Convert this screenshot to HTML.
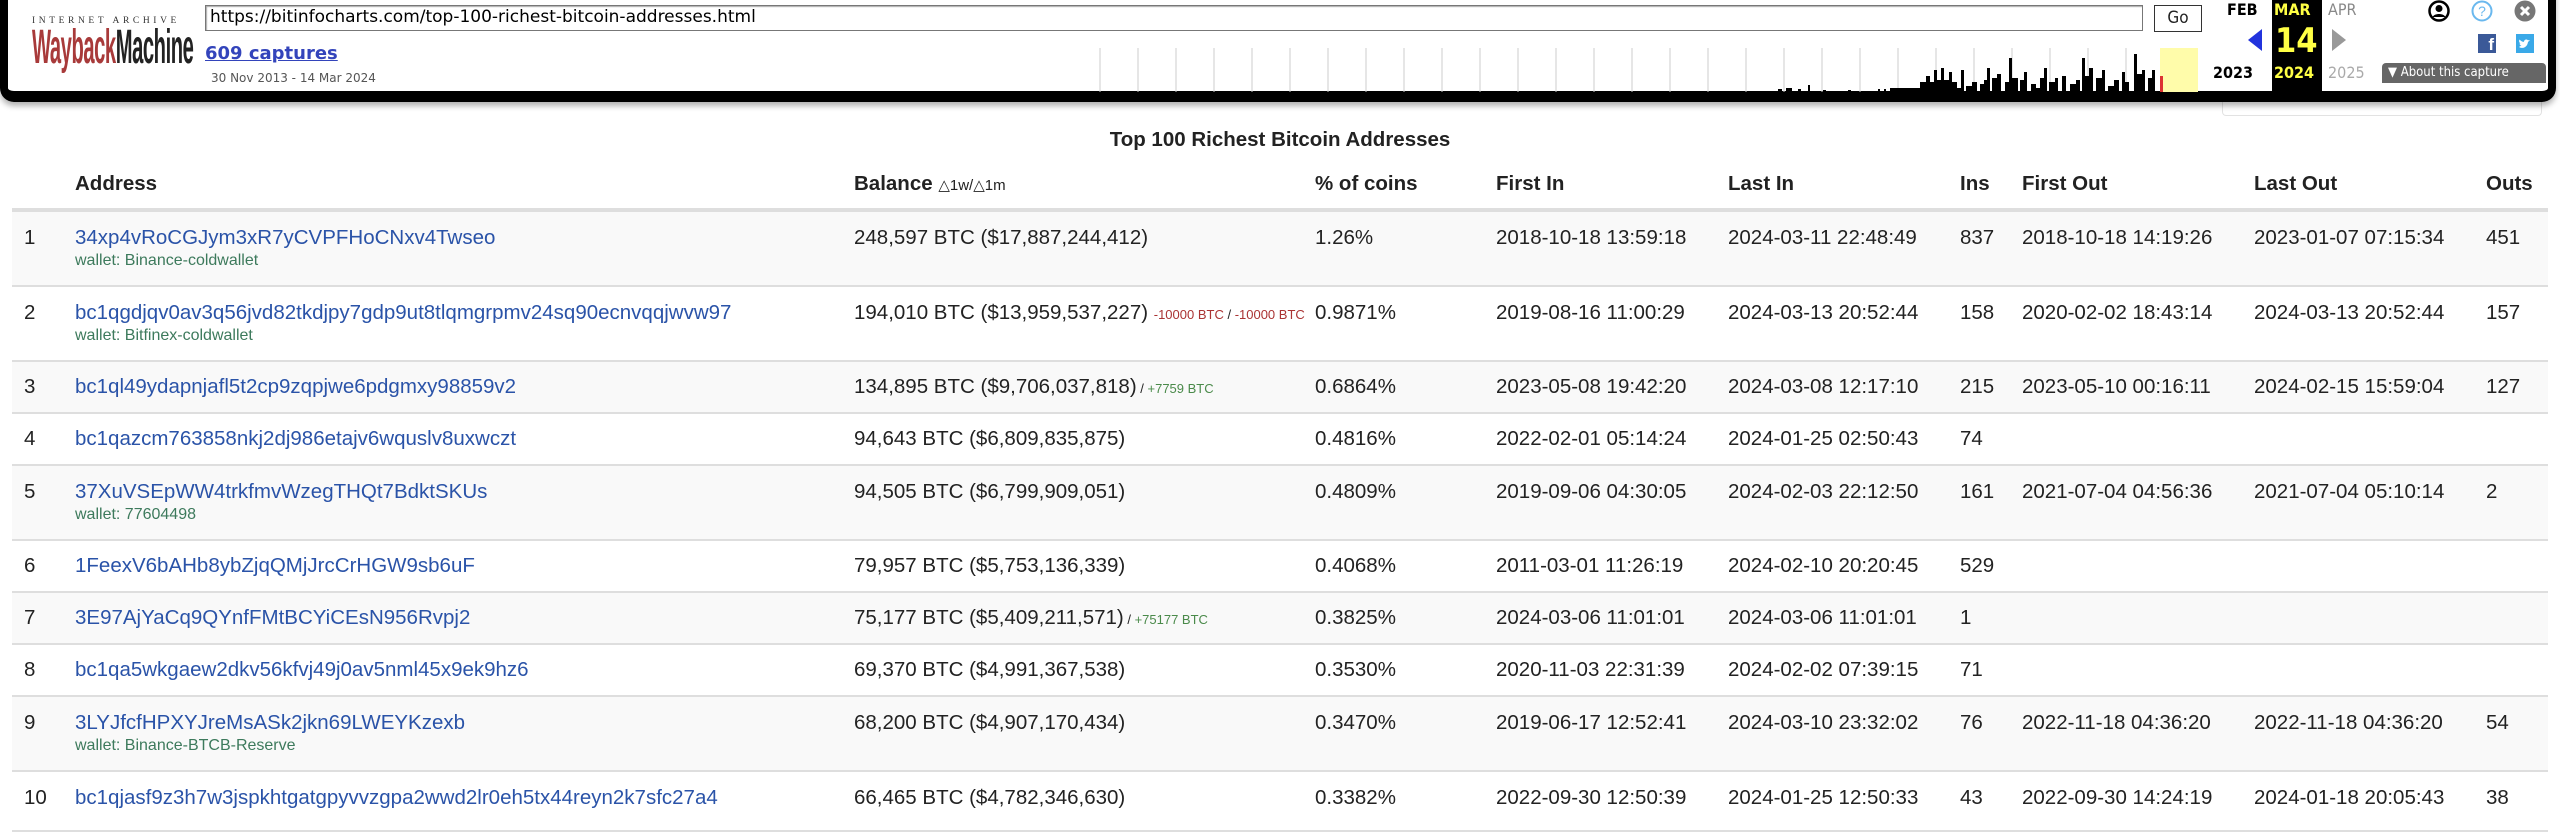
<!DOCTYPE html>
<html><head><meta charset="utf-8">
<style>
*{margin:0;padding:0;box-sizing:border-box}
body{width:2560px;height:820px;overflow:hidden;background:#fff;font-family:"Liberation Sans",Arial,sans-serif;position:relative;color:#222}
.a{position:absolute;white-space:nowrap}
#tb{position:absolute;left:0;top:-10px;width:2556px;height:112px;background:#fff;border:8px solid #000;border-top:none;border-bottom-width:11px;border-radius:0 0 14px 14px;box-shadow:0 4px 6px rgba(0,0,0,.3);z-index:2}
.row{position:absolute;left:12px;width:2536px;border-bottom:2px solid #dedede}
.c{position:absolute;font-size:20.5px;color:#222;white-space:nowrap}
.ad{color:#2a53a8}
.w{position:absolute;font-size:16px;color:#3d7a5c;white-space:nowrap}
.h{position:absolute;top:172px;font-size:20.5px;font-weight:bold;white-space:nowrap}
</style></head><body>
<div class="a" style="left:1050px;top:24px;font-size:22px;color:#e4e9f2">Bitcoin UTXO | Dust | Dormant Bitcoin Addresses</div>
<div class="a" style="left:2222px;top:92px;width:320px;height:24px;border:1px solid #e2e2e2;border-top:none;border-radius:0 0 4px 4px"></div>
<div id="tb">
 <div class="a" style="left:24px;top:26px;font-family:'Liberation Serif',serif;font-size:9.5px;letter-spacing:3.6px;color:#333">INTERNET ARCHIVE</div>
 <div class="a" style="left:24px;top:36px;font-family:'Liberation Sans',sans-serif;font-weight:bold;font-size:48px;letter-spacing:-1px;line-height:44px;transform:scaleX(.42);transform-origin:left top"><span style="color:#a83a3a">Wayback</span><span style="color:#222">Machine</span></div>
 <div class="a" style="left:197px;top:15px;width:1938px;height:26px;border:1px solid #777;box-shadow:inset 1px 1px 1px #aaa;font-family:'DejaVu Sans',sans-serif;font-size:17px;padding:1px 4px;color:#000">https://bitinfocharts.com/top-100-richest-bitcoin-addresses.html</div>
 <div class="a" style="left:2146px;top:15px;width:48px;height:27px;border:1px solid #333;font-family:'DejaVu Sans Condensed','DejaVu Sans',sans-serif;font-size:17px;text-align:center;line-height:25px">Go</div>
 <div class="a" style="left:197px;top:53px;font-family:'DejaVu Sans',sans-serif;font-size:18px;font-weight:bold;color:#3344bb;text-decoration:underline">609 captures</div>
 <div class="a" style="left:203px;top:81px;font-family:'DejaVu Sans',sans-serif;font-size:12px;color:#555">30 Nov 2013 - 14 Mar 2024</div>
 <svg class="a" style="left:1040px;top:58px" width="1170" height="44" viewBox="0 0 1170 44">
  <rect x="1112" y="0" width="38" height="44" fill="#fffcaa"/>
  <g stroke="#ccc" stroke-width="1">
   <path d="M52 0V44M90 0V44M128 0V44M166 0V44M204 0V44M242 0V44M280 0V44M318 0V44M356 0V44M394 0V44M432 0V44M470 0V44M508 0V44M546 0V44M584 0V44M622 0V44M660 0V44M698 0V44M736 0V44M774 0V44M812 0V44M850 0V44M888 0V44M926 0V44M964 0V44M1002 0V44M1040 0V44M1078 0V44"/>
  </g>
  <path fill="#000" d="M730 44V41h4v3zM738 44V40h6v4zM750 44V41h3v3zM760 44V37h2v7zM775 44V42h3v2zM800 44V42h3v2zM830 44V41h2v3zM836 44V41h2v3zM842 44V40h30v4zM872 44V34h6v-6h4v6h4v-12h3v10h4v12zM893 44V20h3v12h5v-8h3v20zM904 44V34h5v6h4v-18h3v22zM918 44V38h6v-4h5v10zM932 44V36h4v-4h3v-12h3v24zM944 44V30h5v-4h4v18zM957 44V34h4v-24h3v20h6v14zM972 44V32h4v-8h3v20zM983 44V36h5v4h4v-10h4v-10h3v24zM1001 44V34h6v-4h3v14zM1014 44V28h4v16zM1022 44V36h6v-4h4v12zM1034 44V10h3v18h4v-8h4v24zM1048 44V30h6v-8h3v22zM1060 44V38h6v-6h5v12zM1074 44V24h3v10h4v10zM1086 44V6h3v20h5v-4h3v22zM1100 44V30h4v-8h3v22z"/>
  <rect x="1112" y="28" width="3" height="16" fill="#d33"/>
 </svg>
 <div class="a" style="left:2264px;top:0;width:50px;height:102px;background:#000"></div>
 <div class="a" style="left:2219px;top:10px;font-family:'DejaVu Sans Condensed',sans-serif;font-weight:bold;font-size:16px;color:#000">FEB</div>
 <div class="a" style="left:2266px;top:10px;font-family:'DejaVu Sans Condensed',sans-serif;font-weight:bold;font-size:16px;color:#ff4">MAR</div>
 <div class="a" style="left:2320px;top:10px;font-family:'DejaVu Sans Condensed',sans-serif;font-size:16px;color:#888">APR</div>
 <div class="a" style="left:2240px;top:39px;width:0;height:0;border-top:11px solid transparent;border-bottom:11px solid transparent;border-right:14px solid #2233dd"></div>
 <div class="a" style="left:2324px;top:39px;width:0;height:0;border-top:11px solid transparent;border-bottom:11px solid transparent;border-left:14px solid #999"></div>
 <div class="a" style="left:2267px;top:31px;font-family:'DejaVu Sans Condensed',sans-serif;font-weight:bold;font-size:34px;color:#ff4">14</div>
 <div class="a" style="left:2205px;top:73px;font-family:'DejaVu Sans Condensed',sans-serif;font-weight:bold;font-size:16px;color:#000">2023</div>
 <div class="a" style="left:2266px;top:73px;font-family:'DejaVu Sans Condensed',sans-serif;font-weight:bold;font-size:16px;color:#ff4">2024</div>
 <div class="a" style="left:2320px;top:73px;font-family:'DejaVu Sans Condensed',sans-serif;font-size:16px;color:#aaa">2025</div>
 <div class="a" style="left:2374px;top:73px;width:164px;height:20px;background:#666;border-radius:4px 4px 0 0;color:#fff;font-family:'DejaVu Sans Condensed',sans-serif;font-size:13px;line-height:20px;padding-left:6px">▼ About this capture</div>
 <svg class="a" style="left:2420px;top:10px" width="22" height="22" viewBox="0 0 22 22"><circle cx="11" cy="11" r="9.5" fill="none" stroke="#000" stroke-width="2.5"/><circle cx="11" cy="8.5" r="3.5"/><path d="M4.5 17c2-4 11-4 13 0z"/></svg>
 <svg class="a" style="left:2463px;top:10px" width="22" height="22" viewBox="0 0 22 22"><circle cx="11" cy="11" r="9.5" fill="none" stroke="#6ab8ee" stroke-width="2"/><text x="11" y="16" font-size="14" text-anchor="middle" fill="#6ab8ee" font-family="Liberation Sans">?</text></svg>
 <svg class="a" style="left:2506px;top:10px" width="22" height="22" viewBox="0 0 22 22"><circle cx="11" cy="11" r="10.5" fill="#777"/><path d="M7 7l8 8M15 7l-8 8" stroke="#fff" stroke-width="3"/></svg>
 <div class="a" style="left:2470px;top:44px;width:18px;height:19px;background:#3b5998;color:#fff;font-weight:bold;font-size:17px;text-align:right;padding-right:2px;line-height:22px;overflow:hidden">f</div>
 <div class="a" style="left:2508px;top:44px;width:18px;height:19px;background:#3aa9e8"><svg width="18" height="19" viewBox="0 0 18 19"><path d="M3 13c3 2 8 1 9-5l2-2-2 .3c-1-1.5-4-1-4 1.5C6 8 4.5 6.5 3.5 5.5c-1 2 0 3 1 4L3.5 9.5c0 1 1 2 2 2.3L4.5 12z" fill="#fff"/></svg></div>
</div>

<div class="a" style="left:0;width:2560px;text-align:center;top:128px;font-size:20.5px;font-weight:bold">Top 100 Richest Bitcoin Addresses</div>
<div class="h" style="left:75px">Address</div>
<div class="h" style="left:854px">Balance <span style="font-weight:normal;font-size:15px">△1w/△1m</span></div>
<div class="h" style="left:1315px">% of coins</div>
<div class="h" style="left:1496px">First In</div>
<div class="h" style="left:1728px">Last In</div>
<div class="h" style="left:1960px">Ins</div>
<div class="h" style="left:2022px">First Out</div>
<div class="h" style="left:2254px">Last Out</div>
<div class="h" style="left:2486px">Outs</div>
<div class="a" style="left:12px;top:208px;width:2536px;height:4px;background:#dedede"></div>

<div class="row" style="top:212px;height:75px;background:#f9f9f9">
 <div class="c" style="left:12px;top:14px">1</div><div class="c ad" style="left:63px;top:14px">34xp4vRoCGJym3xR7yCVPFHoCNxv4Twseo</div><div class="w" style="left:63px;top:40px">wallet: Binance-coldwallet</div>
 <div class="c" style="left:842px;top:14px">248,597 BTC ($17,887,244,412)</div><div class="c" style="left:1303px;top:14px">1.26%</div><div class="c" style="left:1484px;top:14px">2018-10-18 13:59:18</div><div class="c" style="left:1716px;top:14px">2024-03-11 22:48:49</div><div class="c" style="left:1948px;top:14px">837</div><div class="c" style="left:2010px;top:14px">2018-10-18 14:19:26</div><div class="c" style="left:2242px;top:14px">2023-01-07 07:15:34</div><div class="c" style="left:2474px;top:14px">451</div>
</div>
<div class="row" style="top:287px;height:75px;background:#fff">
 <div class="c" style="left:12px;top:14px">2</div><div class="c ad" style="left:63px;top:14px">bc1qgdjqv0av3q56jvd82tkdjpy7gdp9ut8tlqmgrpmv24sq90ecnvqqjwvw97</div><div class="w" style="left:63px;top:40px">wallet: Bitfinex-coldwallet</div>
 <div class="c" style="left:842px;top:14px">194,010 BTC ($13,959,537,227) <span style="font-size:13px;color:#a33">-10000 BTC</span><span style="font-size:13px"> / </span><span style="font-size:13px;color:#a33">-10000 BTC</span></div><div class="c" style="left:1303px;top:14px">0.9871%</div><div class="c" style="left:1484px;top:14px">2019-08-16 11:00:29</div><div class="c" style="left:1716px;top:14px">2024-03-13 20:52:44</div><div class="c" style="left:1948px;top:14px">158</div><div class="c" style="left:2010px;top:14px">2020-02-02 18:43:14</div><div class="c" style="left:2242px;top:14px">2024-03-13 20:52:44</div><div class="c" style="left:2474px;top:14px">157</div>
</div>
<div class="row" style="top:362px;height:52px;background:#f9f9f9">
 <div class="c" style="left:12px;top:13px">3</div><div class="c ad" style="left:63px;top:13px">bc1ql49ydapnjafl5t2cp9zqpjwe6pdgmxy98859v2</div>
 <div class="c" style="left:842px;top:13px">134,895 BTC ($9,706,037,818)<span style="font-size:13px"> / </span><span style="font-size:13px;color:#4a8a4a">+7759 BTC</span></div><div class="c" style="left:1303px;top:13px">0.6864%</div><div class="c" style="left:1484px;top:13px">2023-05-08 19:42:20</div><div class="c" style="left:1716px;top:13px">2024-03-08 12:17:10</div><div class="c" style="left:1948px;top:13px">215</div><div class="c" style="left:2010px;top:13px">2023-05-10 00:16:11</div><div class="c" style="left:2242px;top:13px">2024-02-15 15:59:04</div><div class="c" style="left:2474px;top:13px">127</div>
</div>
<div class="row" style="top:414px;height:52px;background:#fff">
 <div class="c" style="left:12px;top:13px">4</div><div class="c ad" style="left:63px;top:13px">bc1qazcm763858nkj2dj986etajv6wquslv8uxwczt</div>
 <div class="c" style="left:842px;top:13px">94,643 BTC ($6,809,835,875)</div><div class="c" style="left:1303px;top:13px">0.4816%</div><div class="c" style="left:1484px;top:13px">2022-02-01 05:14:24</div><div class="c" style="left:1716px;top:13px">2024-01-25 02:50:43</div><div class="c" style="left:1948px;top:13px">74</div>
</div>
<div class="row" style="top:466px;height:75px;background:#f9f9f9">
 <div class="c" style="left:12px;top:14px">5</div><div class="c ad" style="left:63px;top:14px">37XuVSEpWW4trkfmvWzegTHQt7BdktSKUs</div><div class="w" style="left:63px;top:40px">wallet: 77604498</div>
 <div class="c" style="left:842px;top:14px">94,505 BTC ($6,799,909,051)</div><div class="c" style="left:1303px;top:14px">0.4809%</div><div class="c" style="left:1484px;top:14px">2019-09-06 04:30:05</div><div class="c" style="left:1716px;top:14px">2024-02-03 22:12:50</div><div class="c" style="left:1948px;top:14px">161</div><div class="c" style="left:2010px;top:14px">2021-07-04 04:56:36</div><div class="c" style="left:2242px;top:14px">2021-07-04 05:10:14</div><div class="c" style="left:2474px;top:14px">2</div>
</div>
<div class="row" style="top:541px;height:52px;background:#fff">
 <div class="c" style="left:12px;top:13px">6</div><div class="c ad" style="left:63px;top:13px">1FeexV6bAHb8ybZjqQMjJrcCrHGW9sb6uF</div>
 <div class="c" style="left:842px;top:13px">79,957 BTC ($5,753,136,339)</div><div class="c" style="left:1303px;top:13px">0.4068%</div><div class="c" style="left:1484px;top:13px">2011-03-01 11:26:19</div><div class="c" style="left:1716px;top:13px">2024-02-10 20:20:45</div><div class="c" style="left:1948px;top:13px">529</div>
</div>
<div class="row" style="top:593px;height:52px;background:#f9f9f9">
 <div class="c" style="left:12px;top:13px">7</div><div class="c ad" style="left:63px;top:13px">3E97AjYaCq9QYnfFMtBCYiCEsN956Rvpj2</div>
 <div class="c" style="left:842px;top:13px">75,177 BTC ($5,409,211,571)<span style="font-size:13px"> / </span><span style="font-size:13px;color:#4a8a4a">+75177 BTC</span></div><div class="c" style="left:1303px;top:13px">0.3825%</div><div class="c" style="left:1484px;top:13px">2024-03-06 11:01:01</div><div class="c" style="left:1716px;top:13px">2024-03-06 11:01:01</div><div class="c" style="left:1948px;top:13px">1</div>
</div>
<div class="row" style="top:645px;height:52px;background:#fff">
 <div class="c" style="left:12px;top:13px">8</div><div class="c ad" style="left:63px;top:13px">bc1qa5wkgaew2dkv56kfvj49j0av5nml45x9ek9hz6</div>
 <div class="c" style="left:842px;top:13px">69,370 BTC ($4,991,367,538)</div><div class="c" style="left:1303px;top:13px">0.3530%</div><div class="c" style="left:1484px;top:13px">2020-11-03 22:31:39</div><div class="c" style="left:1716px;top:13px">2024-02-02 07:39:15</div><div class="c" style="left:1948px;top:13px">71</div>
</div>
<div class="row" style="top:697px;height:75px;background:#f9f9f9">
 <div class="c" style="left:12px;top:14px">9</div><div class="c ad" style="left:63px;top:14px">3LYJfcfHPXYJreMsASk2jkn69LWEYKzexb</div><div class="w" style="left:63px;top:40px">wallet: Binance-BTCB-Reserve</div>
 <div class="c" style="left:842px;top:14px">68,200 BTC ($4,907,170,434)</div><div class="c" style="left:1303px;top:14px">0.3470%</div><div class="c" style="left:1484px;top:14px">2019-06-17 12:52:41</div><div class="c" style="left:1716px;top:14px">2024-03-10 23:32:02</div><div class="c" style="left:1948px;top:14px">76</div><div class="c" style="left:2010px;top:14px">2022-11-18 04:36:20</div><div class="c" style="left:2242px;top:14px">2022-11-18 04:36:20</div><div class="c" style="left:2474px;top:14px">54</div>
</div>
<div class="row" style="top:772px;height:60px;background:#fff">
 <div class="c" style="left:12px;top:14px">10</div><div class="c ad" style="left:63px;top:14px">bc1qjasf9z3h7w3jspkhtgatgpyvvzgpa2wwd2lr0eh5tx44reyn2k7sfc27a4</div>
 <div class="c" style="left:842px;top:14px">66,465 BTC ($4,782,346,630)</div><div class="c" style="left:1303px;top:14px">0.3382%</div><div class="c" style="left:1484px;top:14px">2022-09-30 12:50:39</div><div class="c" style="left:1716px;top:14px">2024-01-25 12:50:33</div><div class="c" style="left:1948px;top:14px">43</div><div class="c" style="left:2010px;top:14px">2022-09-30 14:24:19</div><div class="c" style="left:2242px;top:14px">2024-01-18 20:05:43</div><div class="c" style="left:2474px;top:14px">38</div>
</div>
</body></html>
